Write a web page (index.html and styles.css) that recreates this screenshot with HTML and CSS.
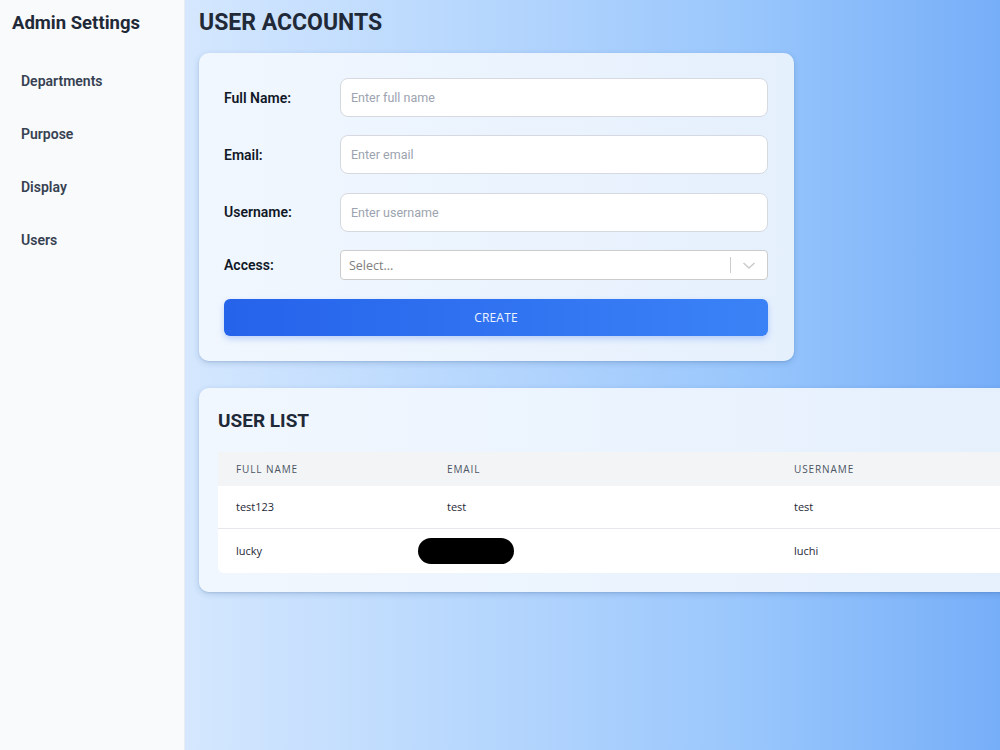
FILE: index.html
```html
<!DOCTYPE html>
<html>
<head>
<meta charset="utf-8">
<link rel="stylesheet" href="styles.css">
</head>
<body>
<div class="app">
  <aside class="sidebar">
    <h2 class="brand">Admin Settings</h2>
    <nav class="nav">
      <a class="nav-item">Departments</a>
      <a class="nav-item">Purpose</a>
      <a class="nav-item">Display</a>
      <a class="nav-item">Users</a>
    </nav>
  </aside>
  <main class="main">
    <h1 class="page-title">USER ACCOUNTS</h1>
    <section class="card form-card">
      <div class="form-row">
        <label class="label">Full Name:</label>
        <input class="input" placeholder="Enter full name">
      </div>
      <div class="form-row">
        <label class="label">Email:</label>
        <input class="input" placeholder="Enter email">
      </div>
      <div class="form-row">
        <label class="label">Username:</label>
        <input class="input" placeholder="Enter username">
      </div>
      <div class="form-row">
        <label class="label">Access:</label>
        <div class="select">
          <span class="select-ph">Select...</span>
          <span class="select-sep"></span>
          <svg class="chev" width="20" height="20" viewBox="0 0 20 20"><path d="M4.5 8 L10 13 L15.5 8" fill="none" stroke="#cccccc" stroke-width="1.6"/></svg>
        </div>
      </div>
      <button class="btn">CREATE</button>
    </section>
    <section class="card list-card">
      <h2 class="list-title">USER LIST</h2>
      <table class="table">
        <colgroup><col class="c1"><col class="c2"><col class="c3"></colgroup>
        <thead>
          <tr><th>Full Name</th><th>Email</th><th>Username</th></tr>
        </thead>
        <tbody>
          <tr><td>test123</td><td>test</td><td>test</td></tr>
          <tr><td>lucky</td><td><span class="redact"></span></td><td>luchi</td></tr>
        </tbody>
      </table>
    </section>
  </main>
</div>
</body>
</html>
```
FILE: styles.css
```css
* { box-sizing: border-box; }
html, body { margin: 0; padding: 0; height: 100%; }
body { font-family: Roboto, "Liberation Sans", sans-serif; color: #1f2937; overflow: hidden; }
.app { display: flex; height: 750px; width: 1000px; }
.sidebar {
  width: 185px; flex: none; background: #f8fafc;
  border-right: 1px solid #e8edf3; padding: 11px 0 0 12px;
}
.brand { margin: 0; font-size: 18.5px; line-height: 24px; font-weight: 700; color: #1f2937; }
.nav { display: flex; flex-direction: column; margin-top: 36px; padding-left: 9px; }
.nav-item { font-size: 14px; line-height: 20px; font-weight: 600; color: #374151; height: 53px; }
.main {
  flex: 1; min-width: 0; overflow: hidden;
  background: linear-gradient(to right, #d4e7fe 0%, #b3d5fd 40%, #98c6fc 70%, #76aef8 100%);
  padding: 7px 0 0 14px;
}
.page-title { margin: 0 0 14px; font-size: 23px; line-height: 32px; font-weight: 700; color: #1f2937; }
.card {
  background: linear-gradient(to right, #f1f7fe, #e5f0fd);
  border-radius: 10px;
  box-shadow: 0 2px 6px rgba(30, 64, 120, 0.18), 0 1px 2px rgba(30,64,120,0.12);
}
.form-card { width: 595px; padding: 25px 26px 25px 25px; display: flex; flex-direction: column; gap: 18.4px; }
.form-row { display: flex; align-items: center; }
.label { width: 116px; flex: none; font-size: 14px; font-weight: 600; color: #111827; }
.input {
  flex: 1; height: 39px; border: 1px solid #d6dae0; border-radius: 8px; background: #fff;
  padding: 0 10px; font-family: Roboto, sans-serif; font-size: 12.5px; color: #111827; outline: none;
}
.input::placeholder { color: #9ca3af; }
.select {
  flex: 1; height: 30px; border: 1px solid #cccccc; border-radius: 4px; background: #fff;
  display: flex; align-items: center; padding-left: 8px;
}
.select-ph { flex: 1; font-family: "Open Sans", sans-serif; font-size: 12.5px; color: #808080; }
.select-sep { width: 1px; height: 16px; background: #cccccc; }
.chev { margin: 0 8px 0 8px; }
.btn {
  height: 37px; border: none; border-radius: 6px;
  background: linear-gradient(to right, #2563eb, #3b82f6);
  color: #eef4ff; font-family: "Open Sans", sans-serif; font-size: 12px; letter-spacing: 0.2px;
  box-shadow: 0 3px 6px rgba(37, 99, 235, 0.25);
}
.list-card { margin-top: 27px; width: 830px; padding: 20px 19px 19px 19px; }
.list-title { margin: 0 0 18px; font-size: 19px; line-height: 26px; font-weight: 700; color: #1f2937; }
.table { width: 100%; border-collapse: collapse; table-layout: fixed; font-family: "Open Sans", sans-serif; }
.c1 { width: 211px; } .c2 { width: 347px; }
.table th {
  background: #f3f4f6; height: 34px; text-align: left; padding: 0 18px;
  font-size: 10px; font-weight: 500; text-transform: uppercase; letter-spacing: 0.9px; color: #4b5563;
}
.table td { background: #fff; height: 43px; padding: 0 18px; font-size: 11px; color: #1f2937; }
.table tbody tr:first-child td { border-bottom: 1px solid #e5e7eb; }
.table tbody tr:last-child td { height: 44px; }
.table tbody tr:last-child td:first-child { border-bottom-left-radius: 6px; }
.redact { display: inline-block; width: 96px; height: 26px; background: #000; border-radius: 13px; margin-left: -29px; vertical-align: middle; }
```
